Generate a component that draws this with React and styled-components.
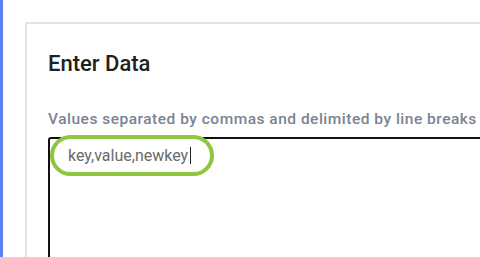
import React from 'react'
import styled, { createGlobalStyle } from 'styled-components'

const GlobalStyle = createGlobalStyle`
  html, body {
    margin: 0;
    padding: 0;
    background: #ffffff;
    font-family: Roboto, "Liberation Sans", sans-serif;
  }
`

const Page = styled.div`
  display: flex;
  width: 480px;
  height: 257px;
  overflow: hidden;
  background: #ffffff;
`

const SideBar = styled.div`
  flex: 0 0 3px;
  background: #5a7ef4;
`

const Main = styled.div`
  flex: 1;
  padding: 22px 0 0 22px;
`

const Card = styled.section`
  width: 620px;
  height: 320px;
  box-sizing: border-box;
  border: 2px solid #e4e4e4;
  background: #ffffff;
  padding: 27px 0 0 21px;
`

const Title = styled.h2`
  margin: 0;
  font-size: 22px;
  font-weight: 500;
  color: #212121;
  line-height: 1.17;
`

const Hint = styled.p`
  margin: 33px 0 0;
  font-size: 15.5px;
  font-weight: 500;
  color: #7b8391;
  letter-spacing: 0.5px;
  line-height: 1.17;
  white-space: nowrap;
`

const Field = styled.div`
  position: relative;
  margin-top: 9px;
`

const TextBox = styled.div`
  width: 520px;
  height: 160px;
  box-sizing: border-box;
  border: 2px solid #111111;
  border-radius: 3px;
  padding: 7px 18px;
  font-size: 16px;
  color: #6a6a6a;
  line-height: 1.2;
`

const Caret = styled.span`
  display: inline-block;
  width: 1px;
  height: 17px;
  margin-left: 2px;
  vertical-align: -3px;
  background: #222;
`

const Highlight = styled.div`
  position: absolute;
  left: 2px;
  top: -2px;
  width: 164px;
  height: 41px;
  box-sizing: border-box;
  border: 4px solid #8dc63f;
  border-radius: 21px;
  pointer-events: none;
`

export default function App() {
  return (
    <>
      <GlobalStyle />
      <Page>
        <SideBar />
        <Main>
          <Card>
            <Title>Enter Data</Title>
            <Hint>Values separated by commas and delimited by line breaks</Hint>
            <Field>
              <TextBox>
                key,value,newkey<Caret />
              </TextBox>
              <Highlight />
            </Field>
          </Card>
        </Main>
      </Page>
    </>
  )
}
